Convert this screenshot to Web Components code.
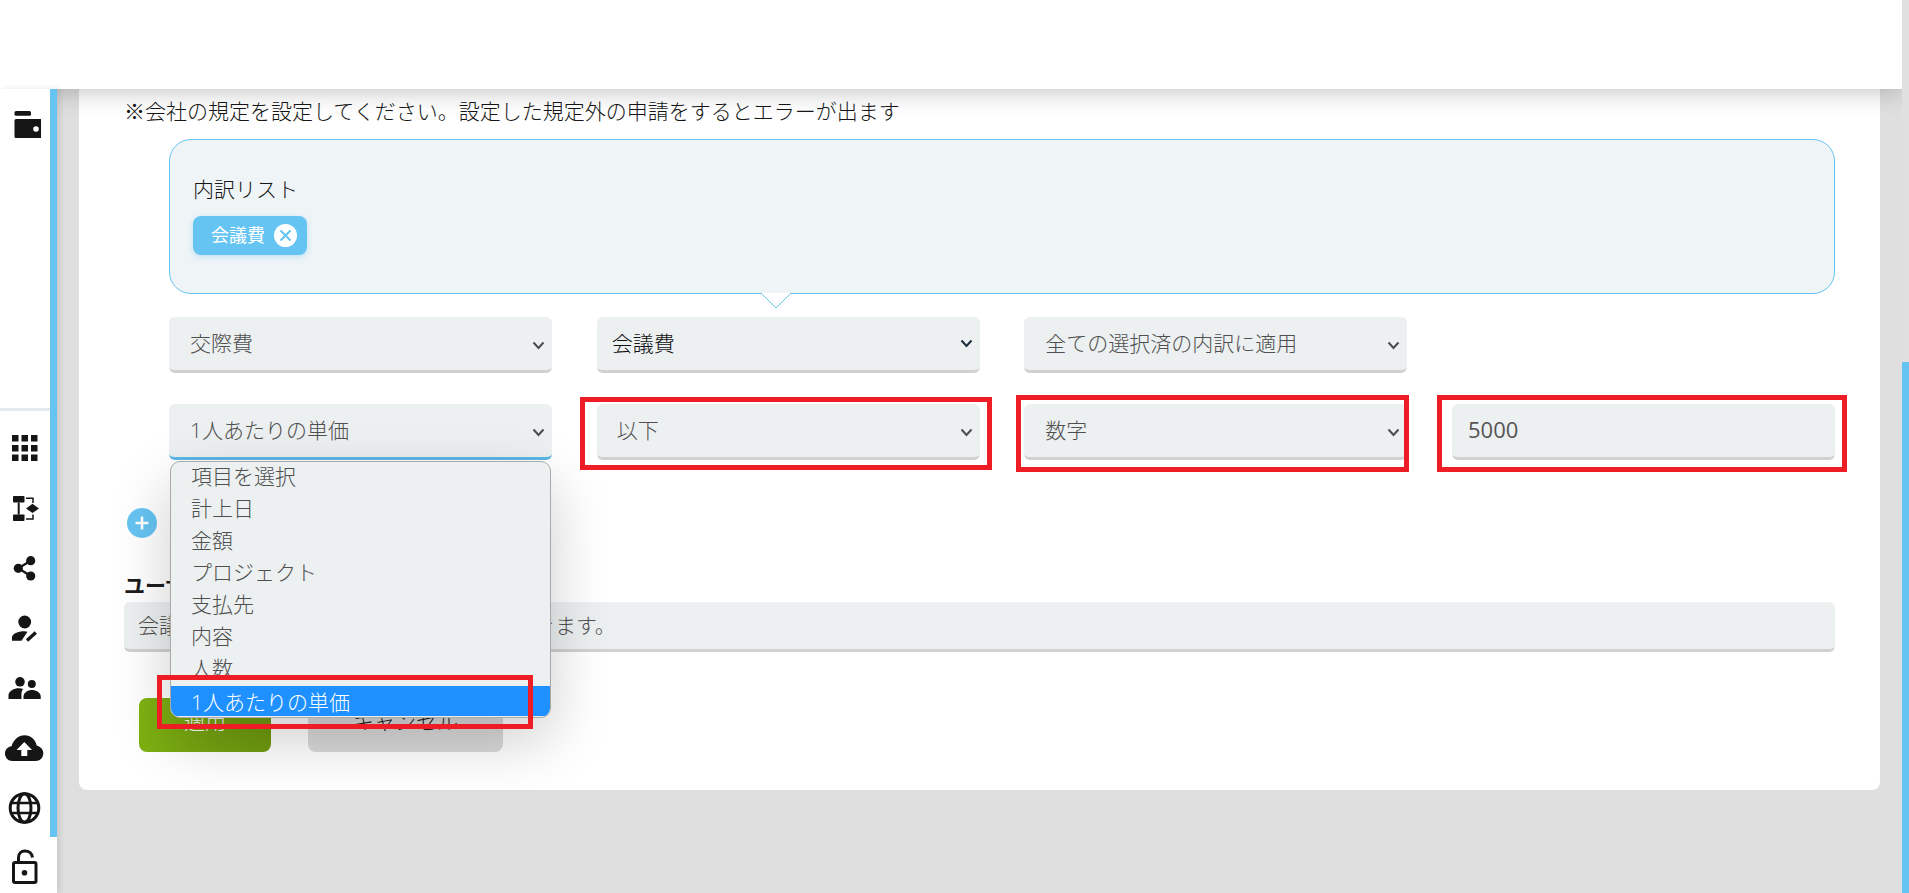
<!DOCTYPE html>
<html lang="ja">
<head>
<meta charset="utf-8">
<title>内訳リスト</title>
<style>
  html, body {
    margin: 0;
    height: 893px;
    overflow: hidden;
    background: #dfdfdf;
    font-family: "Open Sans", "Noto Sans CJK JP", sans-serif;
    font-size: 21px;
    font-weight: 300;
    color: #212529;
  }
</style>
</head>
<body>
<x-app>
  <x-sidebar></x-sidebar>
  <x-card>
    <x-note>※会社の規定を設定してください。設定した規定外の申請をするとエラーが出ます</x-note>
    <x-callout>
      <span slot="title">内訳リスト</span>
      <x-chip>会議費</x-chip>
    </x-callout>
    <x-rule-row style="margin-top: 23px">
      <x-select style="--pad: 21px">交際費</x-select>
      <x-select strong style="--pad: 15px">会議費</x-select>
      <x-select style="--pad: 21px">全ての選択済の内訳に適用</x-select>
    </x-rule-row>
    <x-rule-row style="margin-top: 31px">
      <x-select focused style="--pad: 21px">
        1人あたりの単価
        <x-option slot="menu">項目を選択</x-option>
        <x-option slot="menu">計上日</x-option>
        <x-option slot="menu">金額</x-option>
        <x-option slot="menu">プロジェクト</x-option>
        <x-option slot="menu">支払先</x-option>
        <x-option slot="menu">内容</x-option>
        <x-option slot="menu">人数</x-option>
        <x-option slot="menu" selected>1人あたりの単価</x-option>
      </x-select>
      <x-select style="--pad: 20px">以下</x-select>
      <x-select style="--pad: 21px">数字</x-select>
      <x-text-field style="--pad: 16px">5000</x-text-field>
    </x-rule-row>
    <x-add-button></x-add-button>
    <x-message label="ユーザーへのメッセージ">会議費は1人あたり5000円以下のみ申請できます。</x-message>
    <x-actions>
      <x-button primary style="width: 132px">適用</x-button>
      <x-button style="width: 195px">キャンセル</x-button>
    </x-actions>
  </x-card>
  <x-mark slot="marks" style="left: 580px; top: 397px; width: 412px; height: 73px"></x-mark>
  <x-mark slot="marks" style="left: 1016px; top: 395px; width: 393px; height: 77px"></x-mark>
  <x-mark slot="marks" style="left: 1437px; top: 395px; width: 410px; height: 77px"></x-mark>
  <x-mark slot="marks" style="left: 157px; top: 675px; width: 376px; height: 54px"></x-mark>
</x-app>

<script>
'use strict';

function define(name, css, html, setup) {
  customElements.define(name, class extends HTMLElement {
    constructor() {
      super();
      this.attachShadow({ mode: 'open' });
      this.shadowRoot.innerHTML = `<style>${css}</style>${html}`;
    }

    connectedCallback() {
      if (setup) {
        setup(this);
      }
    }
  });
}

const chevron = `
  <svg class="chevron" width="13" height="9" viewBox="0 0 13 9" fill="none">
    <path d="M1.5 1.5 6.5 7 11.5 1.5" stroke="currentColor" stroke-width="2"/>
  </svg>`;

define('x-app', `
  :host {
    display: grid;
    grid-template-columns: 57px 1fr 7px;
    grid-template-rows: 89px 804px;
    position: relative;
    height: 893px;
    overflow: hidden;
  }
  #header {
    grid-column: 1 / 3;
    background: #fff;
    box-shadow: 0 0 26px rgba(0, 0, 0, 0.28);
    position: relative;
    z-index: 1;
  }
  #scrollbar {
    grid-column: 3;
    grid-row: 1 / 3;
    display: flex;
    flex-direction: column;
    background: #e0e0e0;
    position: relative;
    z-index: 2;
  }
  #scrollbar div {
    margin-top: 362px;
    flex: 1;
    background: #66c4f2;
  }
  #side {
    position: relative;
    z-index: 2;
  }
  #main {
    padding: 0 22px 0 22px;
    min-width: 0;
  }
`, `
  <div id="header"></div>
  <div id="scrollbar"><div></div></div>
  <div id="side"><slot name="side"></slot></div>
  <div id="main"><slot></slot></div>
  <slot name="marks"></slot>
`, (el) => {
  el.querySelector('x-sidebar').slot = 'side';
});

define('x-sidebar', `
  :host {
    display: flex;
    height: 804px;
    background: #fff;
    box-shadow: 3px 0 6px rgba(0, 0, 0, 0.1);
  }
  #icons { width: 50px; overflow: hidden; }
  #strip { width: 7px; height: 748px; background: #66c4f2; }
  #top { height: 319px; }
  #rule { height: 3px; background: #e4ebef; margin-bottom: 7px; }
  svg { display: block; width: 50px; height: 60px; fill: #151515; }
`, `
  <div id="icons">
    <div id="top">
      <svg viewBox="0 89 50 60">
        <rect x="14.5" y="111" width="16.5" height="4.8" rx="1.5"/>
        <path fill-rule="evenodd" d="M16 119H41V138H16A1.5 1.5 0 0 1 14.5 136.500V120.500A1.500 1.500 0 0 1 16 119ZM36 126.200A2.800 2.800 0 1 0 36 131.800A2.800 2.800 0 1 0 36 126.200Z"/>
      </svg>
    </div>
    <div id="rule"></div>
    <svg viewBox="0 418 50 60">
      <path d="M12 435h6.500v6.500H12zM21.500 435H28v6.500h-6.500zM31 435h6.500v6.500H31zM12 445h6.500v6.500H12zM21.500 445H28v6.500h-6.500zM31 445h6.500v6.500H31zM12 454.500h6.500v6.500H12zM21.500 454.500H28v6.500h-6.500zM31 454.500h6.500v6.500H31z"/>
    </svg>
    <svg viewBox="0 478 50 60">
      <rect x="13" y="496" width="11.500" height="6.500" rx="0.800"/>
      <rect x="13" y="514.500" width="11.500" height="6.500" rx="0.800"/>
      <rect x="17.700" y="502.500" width="2" height="12"/>
      <path d="M32.500 503.800 39 508.500 32.500 513 26 508.500Z"/>
      <path d="M26 498.300H33V503M26 519H33V514.500" fill="none" stroke="#151515" stroke-width="1.500"/>
    </svg>
    <svg viewBox="0 538 50 60">
      <circle cx="30.700" cy="560.700" r="4.600"/>
      <circle cx="18.300" cy="568.300" r="4.600"/>
      <circle cx="30.700" cy="576" r="4.600"/>
      <path d="M30.700 560.700 18.300 568.300 30.700 576" fill="none" stroke="#151515" stroke-width="2.200"/>
    </svg>
    <svg viewBox="0 598 50 60">
      <circle cx="24.700" cy="622" r="6.400"/>
      <path d="M12 640.800V637.500C12 633.800 18 631.300 24.500 631.300L27.500 631.800 21.500 640.800Z"/>
      <path d="M27 640.500 35.800 632.500" fill="none" stroke="#151515" stroke-width="3.400"/>
    </svg>
    <svg viewBox="0 658 50 60">
      <circle cx="20" cy="681.800" r="4.800"/>
      <circle cx="31.800" cy="684" r="4"/>
      <path d="M8.500 699V695.500C8.500 691 14 688.300 19 688.300 20.500 688.300 22 688.500 23.300 689 21 691 21.500 695 21.500 699Z"/>
      <path d="M23.500 699V696.500C23.500 692.500 28 690 32 690 36 690 40.700 692.500 40.700 696.500V699Z"/>
    </svg>
    <svg viewBox="0 718 50 60">
      <path d="M12.500 761C8 761 5 757.500 5 753.500 5 749.500 8 746.800 11.500 746.300 13.500 739.800 18.500 735.300 24.500 735.300 31 735.300 35.500 739.800 36.800 745.800 40.500 746.500 43.300 749.500 43.300 753.300 43.300 757.800 40 761 35.500 761Z"/>
      <path d="M24.300 742 32 750H27.300V756H21.300V750H16.500Z" fill="#fff"/>
    </svg>
    <svg viewBox="0 778 50 60" style="fill: none; stroke: #151515; stroke-width: 3">
      <circle cx="24.500" cy="808" r="14.300"/>
      <ellipse cx="24.500" cy="808" rx="6.500" ry="14.300"/>
      <path d="M10.500 803H38.500M10.500 813H38.500" stroke-width="2.600"/>
    </svg>
    <svg viewBox="0 838 50 60" style="fill: none; stroke: #151515; stroke-width: 3">
      <rect x="13.500" y="862.500" width="22.500" height="20" rx="1.500"/>
      <path d="M18.500 862V857.500C18.500 853.500 21 851 25 851 29 851 32 853.500 32.500 857.500"/>
      <circle cx="24.500" cy="872.800" r="2.800" fill="#151515" stroke="none"/>
    </svg>
  </div>
  <div id="strip"></div>
`);

define('x-card', `
  :host {
    display: block;
    box-sizing: border-box;
    height: 701px;
    padding: 7px 45px 0;
    background: #fff;
    border-radius: 0 0 8px 8px;
  }
`, '<slot></slot>');

define('x-note', `
  :host { display: block; line-height: 30px; color: #161616; }
`, '<slot></slot>');

define('x-callout', `
  :host {
    display: block;
    box-sizing: border-box;
    position: relative;
    height: 155px;
    margin: 13px 0 0 45px;
    padding: 34px 25px 0 23px;
    background: #eff4f7;
    border: 1px solid #66c4f2;
    border-radius: 22px;
  }
  #title { line-height: 30px; margin-bottom: 12px; color: #161616; }
  #tail {
    position: absolute;
    left: 590px;
    top: 153px;
    display: block;
  }
`, `
  <div id="title"><slot name="title"></slot></div>
  <slot></slot>
  <svg id="tail" width="32" height="16" viewBox="0 0 32 16">
    <path d="M1 0 16 15 31 0" fill="#fff" stroke="#66c4f2" stroke-width="1"/>
  </svg>
`);

define('x-chip', `
  :host {
    display: inline-flex;
    box-sizing: border-box;
    align-items: center;
    width: 114px;
    height: 39px;
    padding: 0 0 3px 18px;
    gap: 9px;
    background: #66c4f2;
    border-radius: 8px;
    color: #fff;
    font-size: 18px;
    font-weight: 400;
    box-shadow: 0 2px 6px rgba(102, 196, 242, 0.35);
  }
  svg { display: block; flex: none; margin-top: 2px; }
`, `
  <slot></slot>
  <svg width="23" height="23" viewBox="0 0 23 23">
    <circle cx="11.500" cy="11.500" r="11.500" fill="#fff"/>
    <path d="M6.500 6.500 16.500 16.500M16.500 6.500 6.500 16.500" stroke="#66c4f2" stroke-width="2"/>
  </svg>
`);

define('x-rule-row', `
  :host {
    display: grid;
    grid-template-columns: repeat(4, 383px);
    column-gap: 44.67px;
    margin-left: 45px;
  }
`, '<slot></slot>');

define('x-select', `
  :host {
    display: flex;
    box-sizing: border-box;
    align-items: center;
    justify-content: space-between;
    position: relative;
    height: 56px;
    padding: 0 7px 0 var(--pad, 22px);
    background: #ecf0f1;
    border-bottom: 3px solid #d1d1d1;
    border-radius: 6px;
    color: #4f4f4f;
    white-space: nowrap;
  }
  :host([strong]) { color: #111; }
  :host([focused]) { border-bottom-color: #5bb7e5; z-index: 5; }
  span { margin-top: -3px; }
  .chevron { color: #4a4d50; flex: none; margin-top: 3px; }
  :host([strong]) .chevron { color: #1f2d3a; margin-top: 0; }
  #menu {
    display: none;
    position: absolute;
    left: 1px;
    top: calc(100% + 4px);
    box-sizing: border-box;
    width: 381px;
    height: 257px;
    background: #ecf0f1;
    border: 1.5px solid #a9a9a9;
    border-radius: 10px;
    overflow: hidden;
    box-shadow: 0 22px 60px rgba(0, 0, 0, 0.2);
  }
  #menu div { margin-top: -3px; }
  :host([focused]) #menu { display: block; }
`, `
  <span><slot></slot></span>
  ${chevron}
  <div id="menu"><div><slot name="menu"></slot></div></div>
`);

define('x-option', `
  :host {
    display: flex;
    box-sizing: border-box;
    align-items: center;
    height: 32px;
    padding-left: 20px;
    color: #4f4f4f;
  }
  :host([selected]) {
    height: 30px;
    margin-top: 3px;
    background: #1e90ff;
    color: #fff;
  }
`, '<slot></slot>');

define('x-text-field', `
  :host {
    display: flex;
    box-sizing: border-box;
    align-items: center;
    height: 56px;
    padding: 0 0 3px var(--pad, 16px);
    background: #ecf0f1;
    border-bottom: 3px solid #d1d1d1;
    border-radius: 6px;
    color: #555;
    font-size: 22px;
    font-weight: 400;
  }
`, '<slot></slot>');

define('x-add-button', `
  :host {
    display: flex;
    align-items: center;
    justify-content: center;
    width: 30px;
    height: 30px;
    margin: 48px 0 0 3px;
    background: #66c4f2;
    border-radius: 50%;
  }
`, `
  <svg width="16" height="16" viewBox="0 0 16 16">
    <path d="M8 1.500V14.500M1.500 8H14.500" stroke="#fff" stroke-width="2.600"/>
  </svg>
`);

define('x-message', `
  :host { display: block; margin-top: 32px; }
  #label { line-height: 30px; font-weight: 700; color: #1c1c1c; margin-bottom: 2px; }
  #box {
    display: flex;
    box-sizing: border-box;
    align-items: center;
    height: 50px;
    padding: 0 0 3px 14px;
    background: #ecf0f1;
    border-bottom: 3px solid #d1d1d1;
    border-radius: 6px;
    color: #4f4f4f;
  }
`, `
  <div id="label"></div>
  <div id="box"><slot></slot></div>
`, (el) => {
  el.shadowRoot.getElementById('label').textContent = el.getAttribute('label');
});

define('x-actions', `
  :host {
    display: flex;
    gap: 37px;
    margin: 46px 0 0 15px;
  }
`, '<slot></slot>');

define('x-button', `
  :host {
    display: flex;
    box-sizing: border-box;
    align-items: center;
    justify-content: center;
    height: 54px;
    padding-bottom: 10px;
    background: #dadada;
    border-radius: 8px;
    color: #1a1a1a;
  }
  :host([primary]) {
    background: linear-gradient(100deg, #7fb212, #6f9a10);
    color: #fff;
  }
`, '<slot></slot>');

define('x-mark', `
  :host {
    display: block;
    box-sizing: border-box;
    position: absolute;
    border: 5px solid #ee1c25;
    z-index: 10;
  }
`, '');
</script>
</body>
</html>
